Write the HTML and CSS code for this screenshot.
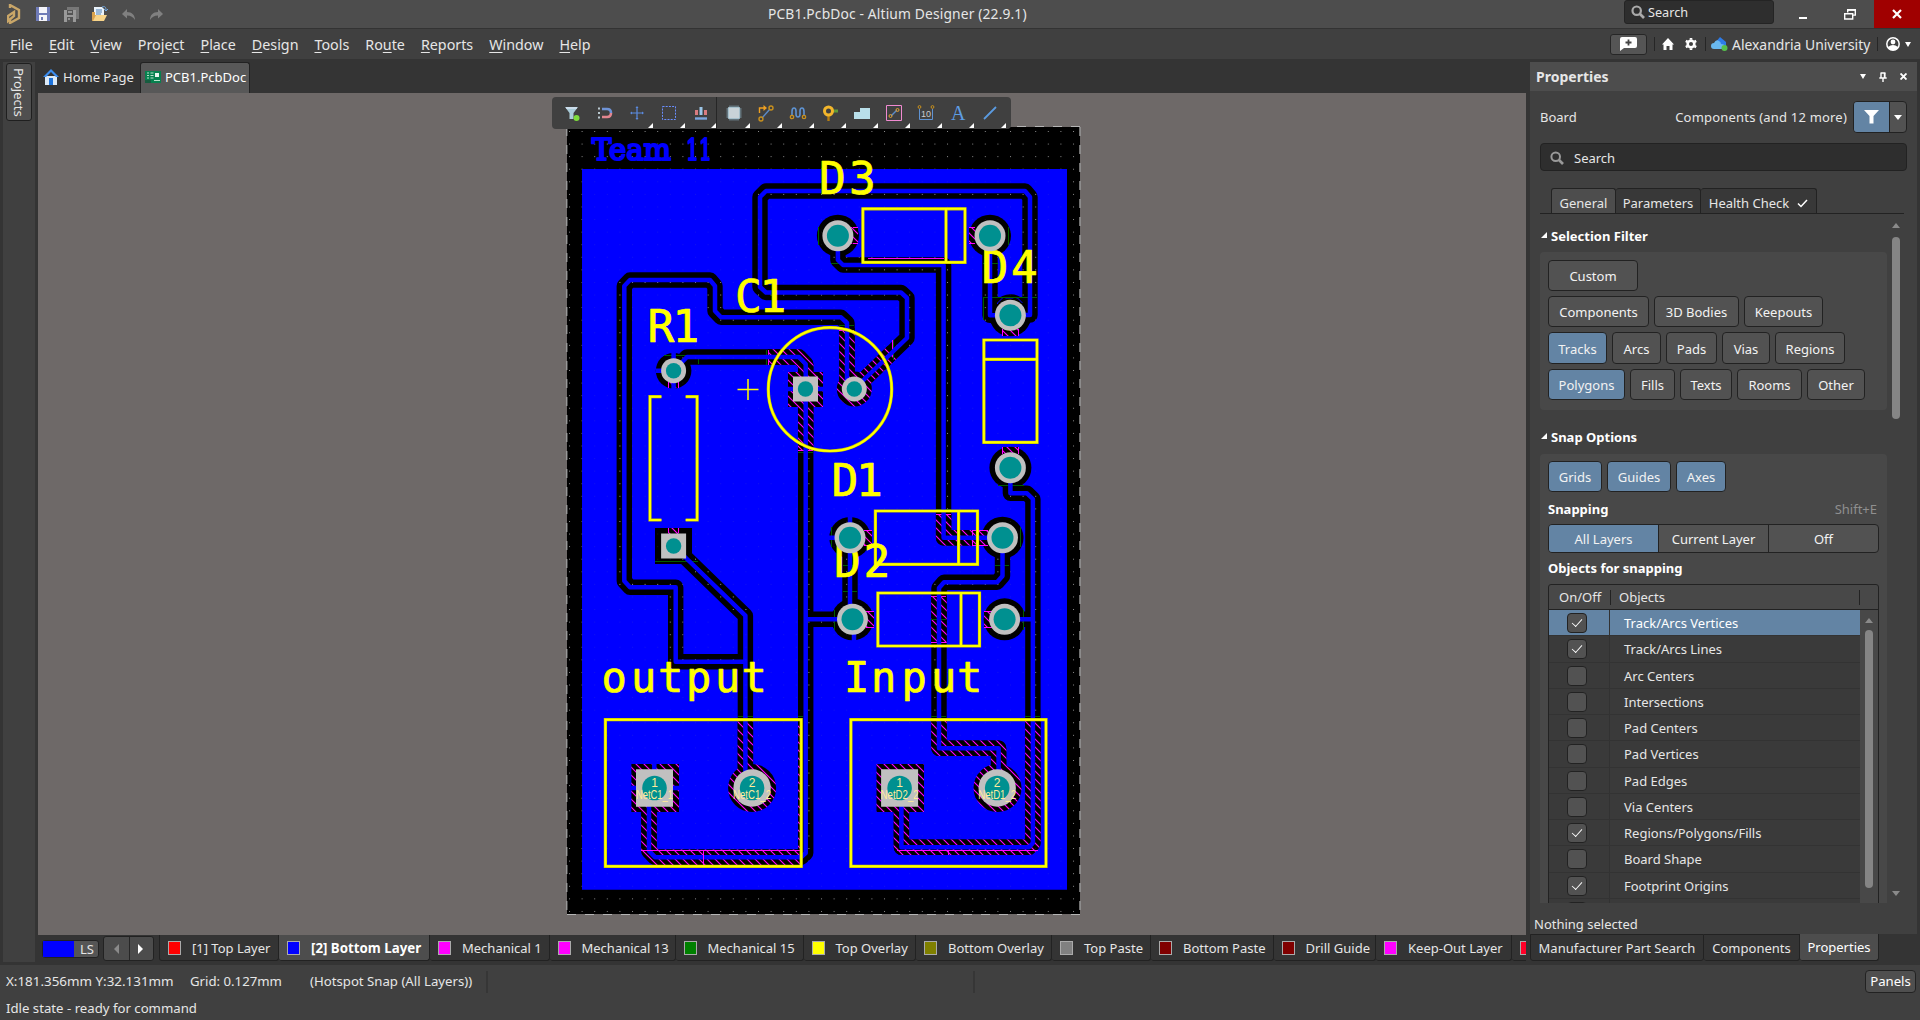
FILE: index.html
```html
<!DOCTYPE html>
<html lang="en">
<head>
<meta charset="utf-8">
<title>PCB1.PcbDoc - Altium Designer (22.9.1)</title>
<link rel="stylesheet" href="styles.css">
</head>
<body>
<header class="titlebar">
  <div class="quick">
    <svg class="logo" width="14" height="20" viewBox="0 0 14 20"><path d="M3 4V1l9 5v8l-9 5v-3M1 12l6-4v4l-6 5z" fill="none" stroke="#c9a668" stroke-width="2.4"/></svg>
    <svg width="14" height="14" viewBox="0 0 14 14"><path d="M0 0h14v14H0z" fill="#6f7bb8"/><path d="M3 0h8v6H3zM3 8h8v6H3z" fill="#f4f4fa"/><path d="M5 10h2v3H5z" fill="#6f7bb8"/></svg>
    <svg width="15" height="15" viewBox="0 0 15 15"><path d="M3 0h12v12H3z" fill="#777"/><path d="M0 3h12v12H0z" fill="#999"/><path d="M3 3h6v5H3zM3 10h6v5H3z" fill="#555"/><path d="M4 5h4M4 12h2" stroke="#ccc"/></svg>
    <svg width="16" height="16" viewBox="0 0 16 16"><path d="M2 1h8l2 2v9H2z" fill="#eaf3fb"/><path d="M4 4h6M4 6h6M4 8h5" stroke="#4c7fb5"/><path d="M0 15V6h3v3h9v6z" fill="#d9a24e"/><path d="M1 15l3-6h11l-3 6z" fill="#f7d48a"/><path d="M10 1c3-1 4 0 4 3m-2-1l2 2 2-2" fill="none" stroke="#6fa5dd"/></svg>
    <svg width="14" height="11" viewBox="0 0 14 11"><path d="M5 0v3c5 0 8 3 8 8-2-3-4-4.500-8-4.500v3L0 5z" fill="#808080"/></svg>
    <svg width="14" height="11" viewBox="0 0 14 11"><path d="M9 0v3c-5 0-8 3-8 8 2-3 4-4.500 8-4.500v3l5-4.500z" fill="#808080"/></svg>
  </div>
  <div class="title">PCB1.PcbDoc - Altium Designer (22.9.1)</div>
  <div class="top-search"><svg width="14" height="14" viewBox="0 0 14 14"><circle cx="5.7" cy="5.7" r="4.2" fill="none" stroke="#aaa" stroke-width="2.2"/><path d="M9 9l4 4" stroke="#aaa" stroke-width="2.6"/></svg><span>Search</span></div>
  <div class="winctl">
    <svg class="min" width="8" height="2"><path d="M0 0h8v2H0z" fill="#fff"/></svg>
    <svg class="restore" width="12" height="11" viewBox="0 0 12 11"><path d="M3.7 3.5V.9h7.6v5.2H8.7M.7 4.7h8v5.3h-8z" fill="none" stroke="#fff" stroke-width="1.4"/><path d="M3 .9h9" stroke="#fff" stroke-width="1.8"/></svg>
    <div class="close"><svg width="10" height="10" viewBox="0 0 10 10"><path d="M1 1l8 8M9 1L1 9" stroke="#fff" stroke-width="2.2"/></svg></div>
  </div>
</header>
<nav class="menubar">
  <ul class="menu">
    <li><u>F</u>ile</li><li><u>E</u>dit</li><li><u>V</u>iew</li><li>Proje<u>c</u>t</li><li><u>P</u>lace</li><li><u>D</u>esign</li><li><u>T</u>ools</li><li>Ro<u>u</u>te</li><li><u>R</u>eports</li><li><u>W</u>indow</li><li><u>H</u>elp</li>
  </ul>
  <div class="account">
    <div class="note-btn"><svg width="17" height="14" viewBox="0 0 17 14"><path d="M2 0h13q2 0 2 2v7q0 2-2 2H4l-4 3V2q0-2 2-2z" fill="#fff"/><path d="M8.500 2.500v6M5.500 5.500h6" stroke="#444" stroke-width="1.800"/></svg></div>
    <i class="sep"></i>
    <svg class="home" width="12" height="12" viewBox="0 0 12 12"><path d="M6 0l6 6.500h-1.500V12h-3V8h-3v4h-3V6.500H0z" fill="#fff"/></svg>
    <svg class="gear" width="12" height="12" viewBox="0 0 13 13"><circle cx="6.500" cy="6.500" r="3.600" fill="none" stroke="#fff" stroke-width="2.800"/><path d="M6.500 0v2M6.500 11v2M.9 3.200l1.800 1M10.300 8.800l1.800 1M.9 9.800l1.800-1M10.300 4.200l1.800-1" stroke="#fff" stroke-width="2.800"/></svg>
    <i class="sep"></i>
    <svg class="cloud" width="17" height="14" viewBox="0 0 17 14"><path d="M4 6l5-6 6 5v5H6z" fill="#2d7be8"/><path d="M3 12q-3 0-3-3t3-3q2-4 5-2 2 1 2 3 4 0 4 3t-3 2z" fill="#69b8ef"/><circle cx="13.500" cy="11" r="3" fill="#56c04c"/></svg>
    <span>Alexandria University</span>
    <i class="sep"></i>
    <svg class="user" width="14" height="14" viewBox="0 0 14 14"><circle cx="7" cy="7" r="6.200" fill="none" stroke="#fff" stroke-width="1.500"/><circle cx="7" cy="5" r="2.400" fill="#fff"/><path d="M2 10q5-4 10 0l-2 3H4z" fill="#fff"/></svg>
    <i class="caret"></i>
  </div>
</nav>
<main class="work">
  <aside class="rail"><div class="rail-inner"><div class="rail-btn">Projects</div></div></aside>
  <section class="editor">
    <div class="doctabs">
      <div class="doctab"><svg width="16" height="16" viewBox="0 0 16 16"><path d="M2 7h12v9H2z" fill="#dceaf7"/><path d="M0 8L8 0l8 8h-3L8 3 3 8z" fill="#3b8df0"/><path d="M6 9h4v7H6z" fill="#1d74dd"/></svg><span>Home Page</span></div>
      <div class="doctab active"><svg width="16" height="12" viewBox="0 0 16 12"><path d="M0 0h16v12H0z" fill="#07814f"/><path d="M10 2h4v4h-4z" fill="#e8f5ee"/><path d="M2 2h2M2 4.500h2M2 7h2M5.500 2h3M5.500 4.500h3M5.500 7h3M9 9.500h6" stroke="#b6e3cb"/><path d="M0 9h6v3H0z" fill="#165c3f"/></svg><span>PCB1.PcbDoc</span></div>
    </div>
    <div class="canvas">
      <svg class="board" width="1488" height="842" viewBox="38 93 1488 842">
        <defs>
          <pattern id="hatch" width="8" height="8" patternUnits="userSpaceOnUse"><path d="M0 0h8v8H0z" fill="#000"/><path d="M-1-1l10 10M-1 7l2 2M7-1l2 2" stroke="#ff00ff" stroke-width="1.150"/></pattern>
          <pattern id="grid" x="569" y="131" width="12.6" height="12.58" patternUnits="userSpaceOnUse"><path d="M0 0h1v1H0z" fill="#8c8c8c"/></pattern>
          <g id="pad-d"><circle r="15.500" fill="#c0c0c0"/><circle r="11" fill="#009090"/></g>
          <g id="pad-r"><circle r="12.500" fill="#c0c0c0"/><circle r="7.700" fill="#009090"/></g>
          <g id="pad-s"><path d="M-12.500-12.500h25v25h-25z" fill="#c0c0c0"/><circle r="7.700" fill="#009090"/></g>
          <g id="pad-c"><circle r="18.700" fill="#c0c0c0"/><circle r="12.300" fill="#009090"/></g>
          <g id="pad-q"><path d="M-18.500-18.700h37v37.400h-37z" fill="#c0c0c0"/><circle r="12.300" fill="#009090"/></g>
          <g id="nets" fill="none" stroke-linejoin="round">
            <path d="M1010 315H1030V197L1025 191H766L760 197V287L766 292.500H901L907 298V338L854.300 389"/>
            <path d="M854.300 389L847 380V323L841 317.300H721L715 311V286L710 280H630L624.300 286V581L630 587.300H675.700V661.700H745.400"/>
            <path d="M673.600 546L745.400 615.700V775L752 788"/>
            <path d="M673.600 370.700L687 357H799L805.700 364V853L801 857.300H655L649 851V788M805.700 619.300H852.500"/>
            <path d="M837.900 235.700V260L843 265H943.600V537.700H1002.500"/>
            <path d="M990 235.700V315.300H1010"/>
            <path d="M1010.400 467.700V493.300H1027L1032.900 499V843L1029 847.300H901.400V788M1004.600 619.300H1033"/>
            <path d="M850 537.700V619"/>
            <path d="M1002.500 537.700V576L997 582.300H944L939 588V748.300H998.600V788"/>
          </g>
        </defs>
        <path d="M567 127h513v787H567z" fill="#000"/>
        <path d="M582 169h485v720.700H582z" fill="#00f"/>
        <use href="#nets" stroke="#000" stroke-width="15.400"/>
        <g fill="#000">
          <circle cx="837.900" cy="235.700" r="21"/><circle cx="990" cy="235.700" r="21"/><circle cx="1010.400" cy="315.300" r="21"/><circle cx="1010.400" cy="467.700" r="21"/>
          <circle cx="850" cy="537.700" r="20.700"/><circle cx="1002.500" cy="537.700" r="21"/><circle cx="852.500" cy="619.300" r="21"/><circle cx="1004.600" cy="619.300" r="21"/>
          <circle cx="673.600" cy="370.700" r="17.800"/><path d="M655 528h37v36h-37zM983 297h54v20h-54z"/>
        </g>
        <path d="M997.500 315V303l5-5h15l5 5v12" fill="#000" stroke="#00f" stroke-width="1" stroke-dasharray="8 3"/>
        <use href="#nets" stroke="url(#grid)" stroke-width="15.400"/>
        <g stroke="url(#hatch)" stroke-width="15.400" fill="none" stroke-linejoin="round">
          <path d="M847 328V380M893 351.500L854 389M768 357H799L805.700 364V451M943.600 514V537.700H990M939 596V643"/>
          <path d="M745.400 720V775M649 788V851L655 857.300H802M939 720V748.300H998.600V775M1032.900 720V843L1029 847.300H901.400V788"/>
        </g>
        <g fill="url(#hatch)">
          <path d="M788 372h35v35h-35zM631.400 764H679v48h-47.600zM876.500 764H924v48h-47.500zM798 720h4v132h-4z"/>
          <circle cx="854.300" cy="389" r="17.500"/><circle cx="752.100" cy="788" r="24"/><circle cx="997.500" cy="788" r="24"/>
          <path d="M850 227h8v17h-8zM969 227h8v17h-8zM1002 328h17v8h-17zM1002 447h17v8h-17zM864 530h8v16h-8zM866 611h8v17h-8zM984 611h8v17h-8zM668 528h11v6h-11zM668 381h11v7h-11z"/>
        </g>
        <path d="M853 227.500h5M853 243.500h5M969 227.500h6M969 243.500h6M1002.500 329v7M1018.500 329v7M1002.500 447v7M1018.500 447v7M668.500 528v5M678.500 528v5M668.500 382v6M678.500 382v6M972 530.500h16M972 545.500h16M972.500 530v16M936 514.500h15M931 596.500h15M931 642.500h15M798 450.500h15M839 330.500h15M768.500 350v15M892.500 340v16M864 530.500h8M864 545.500h8M866 611.500h8M866 627.500h8M984 611.500h8M984 627.500h8" stroke="#f0f" fill="none"/>
        <path d="M831 263.500h8M983 263.500h15M983 297.500h54M983.500 298v22M664 355.500h23M698.500 358v6M766.500 350v15M839 325.500h15M893.500 340v20M655 561.500h43M798 452.500h15M831.500 527v20M1020.500 527v20M843 565.500h14M843 591.500h14M834.500 610v20M1023.500 610v20M995 565.500h14M998 485.500h26M936 509.500h15M931 619.500h15M818.500 227v18M738 716.500h15M798 716.500h5M931 716.500h15M1025 716.500h15M1008.500 227v18" stroke="#005c00" fill="none"/>
        <use href="#nets" stroke="#0000ff" stroke-width="4.500"/>
        <path d="M582 169h485v720.700H582z" fill="url(#grid)" opacity=".14"/>
        <path d="M567 127h15v787h-15zM1067 127h13v787h-13zM582 127h485v42H582zM582 890h485v24H582z" fill="url(#grid)"/>
        <path d="M673.600 365V352M673.600 375V389M656 370.700h10M854 619V642M850 530V516M828 537.700h14M654.300 788V763M631 788h48M788 389h35" stroke="#00f" stroke-width="4.500"/>
        <path d="M868 258.500h76M641 850.500h161M703.500 850v15M897 850.500h141M948.500 850v5" stroke="#f0f" fill="none"/>
        <g fill="none" stroke="#c6c600" stroke-width="3.200"><g id="overlay" >
          <path d="M862.900 208.800H965V262.300H862.900zM946 208V262M983.900 340H1037V442.300H983.900zM984 359.300H1037M875.400 511H977.500V564.300H875.400zM958.600 511V564M877.900 593H979.500V646H877.900zM961 593V646"/>
          <path d="M661.400 396.700H650V520H661.400M685.700 396.700H697.100V520H685.700M605.400 719.700H801.200V866.300H605.400zM850.900 719.700H1046V866.300H850.900z"/>
          <circle cx="830" cy="389.300" r="61.700"/></g>
        </g>
        <use href="#overlay" fill="none" stroke="#ff0" stroke-width="2"/>
        <path d="M737.500 389.500h21M748 379v21" stroke="#ff0" stroke-width="1.500"/>
        <g class="silk">
          <text y="193.500" x="819 849">D3</text><text y="283" x="981.500 1011">D4</text><text y="311.500" x="735 759.500">C1</text><text y="341.500" x="647.500 672.500">R1</text><text y="496" x="831.500 856">D1</text><text y="577" x="834 863.500">D2</text>
          <text class="lc" y="692" x="601.500 631 658 686 715 741.500">output</text><text class="lc" y="692" x="844 871 901.500 931 957">Input</text>
        </g>
        <g class="copper"><text x="592" y="160" textLength="79" lengthAdjust="spacingAndGlyphs">Team</text><text x="686" y="160" textLength="26" lengthAdjust="spacingAndGlyphs">11</text></g>
        <use href="#pad-d" x="837.900" y="235.700"/><use href="#pad-d" x="990" y="235.700"/><use href="#pad-d" x="1010.400" y="315.300"/><use href="#pad-d" x="1010.400" y="467.700"/>
        <use href="#pad-d" x="850" y="537.700"/><use href="#pad-d" x="1002.500" y="537.700"/><use href="#pad-d" x="852.500" y="619.300"/><use href="#pad-d" x="1004.600" y="619.300"/>
        <use href="#pad-r" x="673.600" y="370.700"/><use href="#pad-s" x="673.600" y="546"/><use href="#pad-s" x="805.500" y="389"/><use href="#pad-r" x="854.300" y="389"/>
        <use href="#pad-q" x="654.500" y="788"/><use href="#pad-c" x="752.100" y="788"/><use href="#pad-q" x="899.600" y="788"/><use href="#pad-c" x="997.200" y="788"/>
        <g class="netname">
          <text x="654.500" y="787">1</text><text x="654.500" y="799" textLength="37" lengthAdjust="spacingAndGlyphs">NetC1_1</text>
          <text x="752" y="787">2</text><text x="752" y="799" textLength="38" lengthAdjust="spacingAndGlyphs">NetC1_2</text>
          <text x="899.600" y="787">1</text><text x="899.600" y="799" textLength="38" lengthAdjust="spacingAndGlyphs">NetD2_2</text>
          <text x="997.200" y="787">2</text><text x="997.200" y="799" textLength="38" lengthAdjust="spacingAndGlyphs">NetD1_2</text>
        </g>
        <path d="M567 126.500H1080M567 914.500H1080" stroke="#b4b4b4" stroke-dasharray="9 9"/>
        <path d="M566.700 127V914M1080 127V914" stroke="#989898" stroke-width="1.500" stroke-dasharray="9 9"/>
      </svg>
      <div class="toolbar">
        <div class="tool plain"><svg viewBox="0 0 18 18"><path d="M1 3h13L9.500 9v6h-4V9z" fill="#a9cbd8"/><path d="M2 4h11" stroke="#eef"/><circle cx="12.500" cy="14" r="3" fill="#7ddc3c"/></svg></div>
        <div class="tool plain"><svg viewBox="0 0 18 18"><path d="M2 4.500h2M2 9h2M2 13.500h2" stroke="#b9c8cf" stroke-width="2"/><path d="M6 5h5q4 0 4 4" fill="none" stroke="#6f93d6" stroke-width="2.600"/><path d="M15 9q0 4-4 4H6" fill="none" stroke="#e3868f" stroke-width="2.600"/></svg></div>
        <div class="tool"><svg viewBox="0 0 18 18"><path d="M9 3v12M3 9h12" stroke="#5b8be0" stroke-width="1.200"/><path d="M7.500 4L9 2l1.500 2zM7.500 14L9 16l1.500-2zM4 7.500L2 9l2 1.500zM14 7.500L16 9l-2 1.500z" fill="#5b8be0"/></svg></div>
        <div class="tool"><svg viewBox="0 0 18 18"><path d="M2.500 2.500h13v13h-13z" fill="none" stroke="#6a8fff" stroke-dasharray="2 1.200"/></svg></div>
        <div class="tool last"><svg viewBox="0 0 18 18"><path d="M4.500 6v5M13.500 6v5" stroke="#d97b7f" stroke-width="3"/><path d="M9 3v8" stroke="#9cc6e8" stroke-width="3"/><path d="M3 14.500h12" stroke="#7ba6e0" stroke-width="2.400"/></svg></div>
        <div class="tool"><svg viewBox="0 0 18 18"><path d="M5 1.500v15M7 1.500v15M9 1.500v15M11 1.500v15M13 1.500v15M1.500 5h15M1.500 7h15M1.500 9h15M1.500 11h15M1.500 13h15" stroke="#8fb3c4" stroke-width=".9"/><path d="M3.500 3.500h11v11h-11z" fill="#c9d3d8" stroke="#a5bfcb"/></svg></div>
        <div class="tool"><svg viewBox="0 0 18 18"><path d="M2.500 9V4H8" fill="none" stroke="#f0a020" stroke-width="1.400"/><path d="M6.500 1v6L10 4z" fill="#f0a020"/><path d="M5 14l8-9" stroke="#5b8bc8" stroke-width="1.400"/><circle cx="14" cy="4" r="2" fill="none" stroke="#c8901e" stroke-width="1.400"/><circle cx="4" cy="15" r="2" fill="none" stroke="#c8901e" stroke-width="1.400"/></svg></div>
        <div class="tool"><svg viewBox="0 0 18 18"><path d="M3 11V7.500Q3 4 5 4t2 3v3q0 3 2 3t2-3V7q0-3 2-3t2 3.500V11" fill="none" stroke="#5f93d2" stroke-width="1.600"/><circle cx="3" cy="13" r="1.700" fill="none" stroke="#c8901e" stroke-width="1.300"/><circle cx="15" cy="13" r="1.700" fill="none" stroke="#c8901e" stroke-width="1.300"/></svg></div>
        <div class="tool"><svg viewBox="0 0 18 18"><path d="M11 7h6" stroke="#5f9a3a" stroke-width="3"/><path d="M7.500 10v7" stroke="#b57d12" stroke-width="2.400"/><circle cx="7.500" cy="7" r="4" fill="none" stroke="#f3b62b" stroke-width="3"/></svg></div>
        <div class="tool"><svg viewBox="0 0 18 18"><path d="M1 15V8h6V4h10v11z" fill="#b9dfea"/></svg></div>
        <div class="tool"><svg viewBox="0 0 18 18"><path d="M1.500 1.500h15v15h-15z" fill="none" stroke="#f08ad0"/><path d="M6 12l6-6" stroke="#5b8bc8" stroke-width="1.400"/><circle cx="12.500" cy="6" r="1.500" fill="none" stroke="#e0a030"/><circle cx="5.500" cy="12" r="1.500" fill="none" stroke="#e0a030"/></svg></div>
        <div class="tool"><svg viewBox="0 0 18 18"><path d="M2.500 5v10.500h13V5" fill="none" stroke="#5f93d2"/><circle cx="2.500" cy="3" r="1.400" fill="none" stroke="#c8901e"/><circle cx="15.500" cy="3" r="1.400" fill="none" stroke="#c8901e"/><text x="9" y="13" font-family="Liberation Sans" font-size="9" fill="#ccc" text-anchor="middle">10</text></svg></div>
        <div class="tool letter">A</div>
        <div class="tool"><svg viewBox="0 0 18 18"><path d="M3 15L15 3" stroke="#5a9be0" stroke-width="1.800"/></svg></div>
      </div>
    </div>
    <div class="layers">
      <div class="ls"><i></i><span>LS</span></div>
      <div class="nav"><b class="prev"></b><b class="next"></b></div>
      <div class="layer l1"><i class="red"></i>[1] Top Layer</div>
      <div class="layer l2 active"><i class="blue"></i>[2] Bottom Layer</div>
      <div class="layer l3"><i class="mag"></i>Mechanical 1</div>
      <div class="layer l4"><i class="mag"></i>Mechanical 13</div>
      <div class="layer l5"><i class="green"></i>Mechanical 15</div>
      <div class="layer l6"><i class="yellow"></i>Top Overlay</div>
      <div class="layer l7"><i class="olive"></i>Bottom Overlay</div>
      <div class="layer l8"><i class="gray"></i>Top Paste</div>
      <div class="layer l9"><i class="maroon"></i>Bottom Paste</div>
      <div class="layer l10"><i class="maroon"></i>Drill Guide</div>
      <div class="layer l11"><i class="mag"></i>Keep-Out Layer</div>
      <div class="layer l12"><i class="crimson"></i></div>
    </div>
  </section>
  <aside class="panel">
    <div class="panel-head"><strong>Properties</strong>
      <span class="head-icons"><i class="caret"></i><svg width="8" height="10" viewBox="0 0 8 10"><path d="M1.500 1h5M2 1v5M5.500 1v5M.3 6h7.400M4 6v4" stroke="#fff" stroke-width="1.400" fill="none"/><path d="M5 1h1.500v5H5z" fill="#fff"/></svg><svg width="7" height="7" viewBox="0 0 7 7"><path d="M.5.5l6 6M6.500.5l-6 6" stroke="#fff" stroke-width="1.900"/></svg></span>
    </div>
    <div class="panel-body">
      <div class="scope"><span>Board</span><span class="what">Components (and 12 more)</span>
        <div class="filter"><div class="funnel"><svg width="15" height="14" viewBox="0 0 15 14"><path d="M0 0h15L9.500 6v7.500h-4V6z" fill="#fff"/></svg></div><div class="drop"><i class="caret"></i></div></div>
      </div>
      <div class="search"><svg width="14" height="14" viewBox="0 0 14 14"><circle cx="5.700" cy="5.700" r="4.300" fill="none" stroke="#999" stroke-width="2"/><path d="M9 9l4 4" stroke="#999" stroke-width="2.600"/></svg>Search</div>
      <div class="tabs"><div class="tab t1 on">General</div><div class="tab t2">Parameters</div><div class="tab t3">Health Check<svg width="11" height="9" viewBox="0 0 11 9"><path d="M1 4.500l3 3L10 1" fill="none" stroke="#fff" stroke-width="1.500"/></svg></div></div>
      <div class="scroll">
        <div class="sections">
          <h3>Selection Filter</h3>
          <div class="group first">
            <div class="row"><div class="chip w90">Custom</div></div>
            <div class="row"><div class="chip w101">Components</div><div class="chip w85">3D Bodies</div><div class="chip w79">Keepouts</div></div>
            <div class="row tall"><div class="chip w59 on">Tracks</div><div class="chip w49">Arcs</div><div class="chip w51">Pads</div><div class="chip w48">Vias</div><div class="chip w70">Regions</div></div>
            <div class="row"><div class="chip w77 on">Polygons</div><div class="chip w45">Fills</div><div class="chip w52">Texts</div><div class="chip w65">Rooms</div><div class="chip w58">Other</div></div>
          </div>
          <h3 class="snap">Snap Options</h3>
          <div class="group second">
            <div class="row"><div class="chip w54 on">Grids</div><div class="chip w64 on">Guides</div><div class="chip w50 on">Axes</div></div>
            <div class="label"><strong>Snapping</strong><span>Shift+E</span></div>
            <div class="segments"><div class="on">All Layers</div><div>Current Layer</div><div>Off</div></div>
            <div class="label objects"><strong>Objects for snapping</strong></div>
            <div class="table">
              <div class="thead"><span>On/Off</span><span>Objects</span></div>
              <div class="tbody">
                <div class="rows">
                  <div class="tr sel"><i class="cb ck"></i><span>Track/Arcs Vertices</span></div>
                  <div class="tr"><i class="cb ck"></i><span>Track/Arcs Lines</span></div>
                  <div class="tr"><i class="cb"></i><span>Arc Centers</span></div>
                  <div class="tr"><i class="cb"></i><span>Intersections</span></div>
                  <div class="tr"><i class="cb"></i><span>Pad Centers</span></div>
                  <div class="tr"><i class="cb"></i><span>Pad Vertices</span></div>
                  <div class="tr"><i class="cb"></i><span>Pad Edges</span></div>
                  <div class="tr"><i class="cb"></i><span>Via Centers</span></div>
                  <div class="tr"><i class="cb ck"></i><span>Regions/Polygons/Fills</span></div>
                  <div class="tr"><i class="cb"></i><span>Board Shape</span></div>
                  <div class="tr"><i class="cb ck"></i><span>Footprint Origins</span></div>
                  <div class="tr"><i class="cb"></i><span></span></div>
                </div>
                <div class="inner-bar"><i class="up"></i><b></b></div>
              </div>
            </div>
          </div>
        </div>
        <div class="outer-bar"><i class="up"></i><b></b><i class="down"></i></div>
      </div>
      <div class="nothing">Nothing selected</div>
    </div>
    <div class="ptabs"><div class="p1">Manufacturer Part Search</div><div class="p2">Components</div><div class="p3 on">Properties</div></div>
  </aside>
</main>
<footer class="status">
  <div class="line1"><span class="xy">X:181.356mm Y:32.131mm</span><span class="gr">Grid: 0.127mm</span><span class="hot">(Hotspot Snap (All Layers))</span><i class="div1"></i><i class="div2"></i><div class="panels">Panels</div></div>
  <div class="line2">Idle state - ready for command</div>
</footer>
</body>
</html>
```
FILE: styles.css
```css
* { box-sizing: border-box; }
body {
  margin: 0; width: 1920px; height: 1020px; overflow: hidden;
  display: flex; flex-direction: column;
  background: #343434; color: #e6e6e6;
  font: 13.5px/20px "Noto Sans", "Open Sans", sans-serif;
  white-space: nowrap;
}
svg { display: block; flex: none; }
i, b { display: block; flex: none; }
.caret { width: 0; height: 0; border: 3.5px solid transparent; border-top: 5px solid #fff; border-bottom: 0; }

.titlebar { height: 29px; flex: none; display: flex; align-items: center; background: #4d4d4d; border-bottom: 1px solid #333; }
.quick { width: 768px; display: flex; align-items: center; padding-left: 7px; }
.quick svg { margin-right: 13.5px; }
.quick .logo { margin-right: 15px; }
.title { width: 856px; font-size: 13.8px; letter-spacing: .15px; }
.top-search { width: 150px; height: 24px; align-self: flex-start; display: flex; align-items: center; gap: 3px; padding-left: 6px; background: #2e2e2e; border: 1px solid #242424; border-radius: 3px; font-size: 12.7px; }
.winctl { flex: 1; align-self: stretch; display: flex; align-items: center; }
.winctl .min { margin: 8px 37px 0 25px; }
.close { margin-left: auto; width: 46px; height: 28px; display: flex; align-items: center; justify-content: center; background: #a00000; }

.menubar { height: 30px; flex: none; display: flex; align-items: center; background: #404040; }
.menu { list-style: none; margin: 0; padding: 2px 0 0 10px; display: flex; gap: 16px; font-size: 14.3px; }
.menu u { text-underline-offset: 2px; }
.account { width: 310px; margin-left: auto; display: flex; align-items: center; }
.account span { width: 139px; font-size: 13.9px; padding-top: 1px; }
.note-btn { width: 37px; height: 21px; display: flex; align-items: center; justify-content: center; background: #555; border: 1px solid #262626; border-radius: 3px; }
.sep { width: 1px; height: 14px; background: #262626; }
.note-btn + .sep { margin: 0 7px; }
.gear { margin: 0 8px 0 11px; }
.cloud { margin: 0 4px 0 5px; }
.account span + .sep { margin: 0 8px 0 6px; }
.user { margin-right: 5px; }

.work { height: 906px; flex: none; display: flex; }
.rail { width: 38px; padding: 3px 3px; flex: none; }
.rail-inner { height: 900px; background: #404040; padding: 1px 0 0 3px; }
.rail-btn { width: 26px; height: 58px; writing-mode: vertical-rl; display: flex; align-items: center; justify-content: center; background: #4f4f4f; border: 1px solid #1f1f1f; border-radius: 3px; font-size: 13px; }

.editor { width: 1488px; flex: none; display: flex; flex-direction: column; }
.doctabs { height: 34px; display: flex; align-items: flex-end; font-size: 13px; }
.doctab { width: 102px; height: 31px; display: flex; align-items: center; gap: 4px; padding: 0 0 1px 5px; }
.doctab.active { width: 110px; padding: 0 0 2px 4px; background: #585858; border: 1px solid #222; border-bottom: 0; border-radius: 3px 3px 0 0; color: #fff; }
.canvas { position: relative; height: 842px; background: #6e6968; overflow: hidden; }
.silk { font-family: "DejaVu Sans Mono", monospace; font-size: 44.5px; fill: #ff0; stroke: #ff0; stroke-width: .7px; stroke-linejoin: round; }
.silk .lc { font-size: 42px; }
.copper { font-family: "DejaVu Serif", serif; font-size: 30.5px; fill: #00f; stroke: #00f; stroke-width: 2.2px; stroke-linejoin: round; }
.netname { font-family: "Liberation Sans", sans-serif; font-size: 12px; fill: #ffeb9c; text-anchor: middle; }
.toolbar { position: absolute; left: 514px; top: 4px; width: 459px; height: 32px; display: flex; padding-left: 5px; background: #404040; border-radius: 4px; }
.tool { position: relative; width: 32.1px; height: 32px; display: flex; align-items: center; justify-content: center; flex: none; }
.tool svg { width: 18px; height: 18px; }
.tool::after { content: ""; position: absolute; right: 0; bottom: 1px; border: solid transparent; border-width: 0 0 5px 5px; border-bottom-color: #fff; }
.tool.plain::after { display: none; }
.tool.last { border-right: 1px solid #262626; }
.letter { font: 20px "Liberation Serif", serif; color: #5e9de4; }

.layers { height: 29px; display: flex; padding-left: 4px; overflow: hidden; align-items: flex-start; }
.ls { width: 57px; height: 18px; margin: 5px 4px 0 0; display: flex; align-items: center; flex: none; background: #555; border: 1px solid #222; border-radius: 3px; font-size: 13px; }
.ls i { width: 31px; height: 16px; background: #00f; margin-right: 6px; }
.nav { width: 51px; height: 25px; margin: 1px 4px 0 0; display: flex; align-items: center; justify-content: space-around; background: linear-gradient(90deg, transparent 25px, #262626 25px 26px, transparent 26px) #4c4c4c; border: 1px solid #222; border-radius: 3px; flex: none; }
.nav b { border: 5px solid transparent; }
.nav .prev { border-right-color: #8a8a8a; border-left: 0; }
.nav .next { border-left-color: #fff; border-right: 0; }
.layer { height: 26px; flex: none; display: flex; align-items: center; padding: 1px 0 0 8px; border: 1px solid #222; border-width: 0 1px 1px 0; border-radius: 0 0 3px 3px; font-size: 13px; }
.layer i { width: 13px; height: 14px; border: 1px solid #aaa; margin: -1px 11px 0 0; }
.layer.active { background: #4d4d4d; color: #fff; font-weight: 700; font-size: 13.3px; }
.l1 { width: 120px; border-left-width: 1px; } .l2 { width: 151px; } .l3 { width: 119.500px; } .l4 { width: 126px; }
.l5 { width: 128px; } .l6 { width: 112.500px; } .l7 { width: 136px; } .l8 { width: 99px; }
.l9 { width: 122.500px; } .l10 { width: 102.500px; } .l11 { width: 136px; } .l12 { width: 40px; }
.red { background: #f00; } .blue { background: #00f; } .mag { background: #f0f; } .green { background: #008000; }
.yellow { background: #ff0; } .olive { background: #808000; } .gray { background: #808080; } .maroon { background: #800000; } .crimson { background: #ff0028; }
.nav + .l1 { margin-left: 1px; }

.panel { width: 387px; margin: 3px 0 0 4px; display: flex; flex-direction: column; }
.panel-head { height: 29px; flex: none; display: flex; align-items: center; justify-content: space-between; padding: 0 10px 0 6px; background: #4d4d4d; font-size: 14px; }
.head-icons { display: flex; align-items: center; gap: 13px; }
.panel-body { height: 843px; flex: none; background: #404040; display: flex; flex-direction: column; font-size: 13px; }
.scope { height: 53px; padding: 10px 10px 0 10px; display: flex; align-items: flex-start; line-height: 32px; }
.scope .what { margin-left: auto; margin-right: 6px; letter-spacing: .2px; }
.filter { width: 54px; height: 32px; display: flex; border: 1px solid #222; border-radius: 4px; overflow: hidden; background: #525252; }
.funnel { width: 36px; display: flex; align-items: center; justify-content: center; background: #6384a4; border-right: 1px solid #222; }
.drop { flex: 1; display: flex; align-items: center; justify-content: center; }
.drop .caret { border-width: 5px 4.5px 0; }
.search { height: 28px; margin: 1px 10px 0 10px; flex: none; display: flex; align-items: center; gap: 10px; padding: 1px 0 0 9px; background: #2e2e2e; border: 1px solid #222; border-radius: 4px; }
.tabs { height: 26px; margin: 17px 13px 0 10px; padding-left: 11px; flex: none; display: flex; border-bottom: 1px solid #222; }
.tab { display: flex; align-items: center; justify-content: center; gap: 8px; background: #383838; border: 1px solid #222; border-width: 1px 1px 0 0; border-radius: 3px 3px 0 0; padding-top: 4px; }
.tab.on { background: #4d4d4d; border-left-width: 1px; }
.t1 { width: 65px; } .t2 { width: 85px; } .t3 { width: 116px; }
.scroll { height: 689px; flex: none; display: flex; overflow: hidden; }
.sections { width: 347px; margin-left: 10px; padding-top: 1px; }
h3 { margin: 0; height: 37px; padding: 11px 0 0 11px; font-size: 13px; line-height: 20px; color: #fff; position: relative; }
h3::before { content: ""; position: absolute; left: 1px; top: 17px; border: solid transparent; border-width: 0 0 6px 6px; border-bottom-color: #fff; }
.snap { height: 44px; padding-top: 17px; }
.snap::before { top: 23px; }
.group { background: #484848; border-radius: 4px; padding: 8px 8px 0; }
.first { height: 158px; }
.second { height: 460px; padding-top: 7px; }
.row { display: flex; gap: 5px; height: 31px; margin-bottom: 5px; }
.row.tall { height: 32px; }
.chip { display: flex; align-items: center; justify-content: center; background: #525252; border: 1px solid #222; border-radius: 4px; color: #f2f2f2; flex: none; padding-top: 1px; }
.chip.on, .segments .on { background: #6384a4; }
.w90 { width: 90px; } .w101 { width: 101px; } .w85 { width: 85px; } .w79 { width: 79px; } .w59 { width: 59px; } .w49 { width: 49px; } .w51 { width: 51px; } .w48 { width: 48px; } .w70 { width: 70px; }
.w77 { width: 77px; } .w45 { width: 45px; } .w52 { width: 52px; } .w65 { width: 65px; } .w58 { width: 58px; } .w54 { width: 54px; } .w64 { width: 64px; } .w50 { width: 50px; }
.label { height: 27px; display: flex; justify-content: space-between; padding: 2px 2px 0 0; color: #fff; }
.label span { color: #8f8f8f; }
.segments { height: 29px; display: flex; border: 1px solid #222; border-radius: 4px; overflow: hidden; background: #525252; color: #f2f2f2; }
.segments div { flex: 1; display: flex; align-items: center; justify-content: center; border-left: 1px solid #222; padding-top: 1px; }
.segments .on { border-left: 0; }
.label.objects { height: 31px; padding-top: 5px; }
.table { border: 1px solid #222; border-radius: 3px 3px 0 0; height: 330px; }
.thead { height: 25px; display: flex; align-items: center; border-bottom: 1px solid #222; }
.thead span { width: 62px; padding-left: 10px; line-height: 15px; border-right: 1px solid #222; }
.thead span + span { width: 249px; padding-left: 8px; }
.tbody { display: flex; }
.rows { width: 311px; background: #3a3a3a; }
.tr { height: 26.250px; display: flex; align-items: stretch; line-height: 26px; border-bottom: 1px solid #333; }
.tr .cb { width: 20px; height: 20px; margin: 3px 22px 0 18px; background: #525252; border: 1px solid #222; border-radius: 4px; }
.tr span { flex: 1; border-left: 1px solid #323232; padding-left: 14px; }
.tr.sel { background: #6384a4; color: #fff; }
.cb.ck { display: flex; justify-content: center; padding-top: 3px; }
.cb.ck::after { content: ""; width: 5px; height: 10px; border: solid #fff; border-width: 0 1.500px 1.500px 0; transform: translateY(-1px) rotate(42deg) scale(.9); }
.inner-bar { padding: 8px 0 0 5px; }
.up { border: 4px solid transparent; border-top: 0; border-bottom: 5px solid #8a8a8a; }
.down { border: 4px solid transparent; border-bottom: 0; border-top: 5px solid #8a8a8a; }
.inner-bar b { width: 8px; height: 258px; margin-top: 7px; border-radius: 4px; background: #858585; }
.outer-bar { padding: 9px 0 0 5px; }
.outer-bar b { width: 8px; height: 182px; margin-top: 9px; border-radius: 4px; background: #858585; }
.outer-bar .down { margin-top: 472px; }
.nothing { padding: 11px 0 0 4px; }
.ptabs { height: 27px; display: flex; flex: none; font-size: 13px; }
.ptabs div { display: flex; align-items: center; justify-content: center; border: 1px solid #222; border-width: 1px 1px 1px 0; border-radius: 0 0 3px 3px; }
.ptabs .p1 { width: 174px; border-left-width: 1px; } .ptabs .p2 { width: 96px; } .ptabs .p3 { width: 79px; background: #4d4d4d; border-top: 0; color: #fff; }

.status { height: 55px; flex: none; background: #404040; font-size: 13.200px; }
.line1 { height: 31px; display: flex; align-items: center; padding: 0 4px 0 6px; }
.xy { width: 184px; font-size: 13.400px; } .gr { width: 120px; } .hot { width: 176px; }
.div1, .div2 { width: 2px; height: 22px; background: #363636; margin-top: 2px; }
.div2 { margin-left: 485px; }
.panels { margin: 1px 0 0 auto; width: 51px; height: 23px; display: flex; align-items: center; justify-content: center; background: #4f4f4f; border: 1px solid #222; border-radius: 4px; color: #fff; }
.line2 { padding: 1px 0 0 6px; line-height: 22px; }
```
